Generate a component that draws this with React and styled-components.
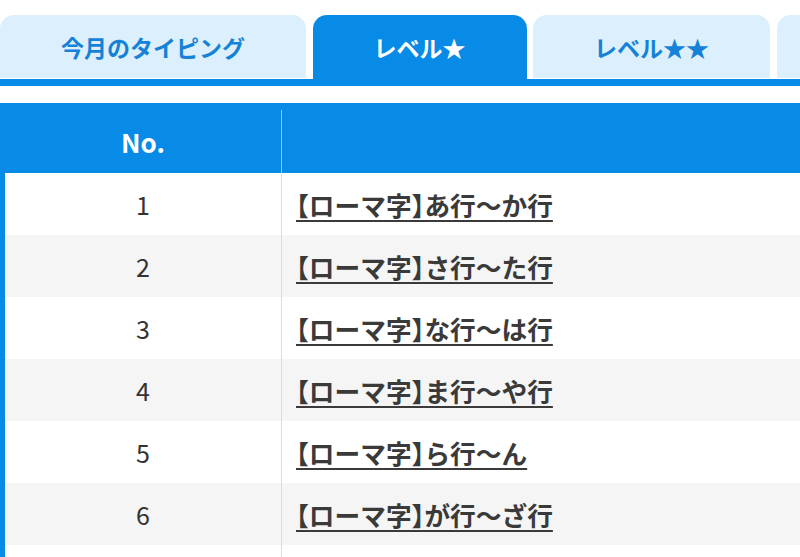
import React from 'react';
import styled, { createGlobalStyle } from 'styled-components';

const GlobalStyle = createGlobalStyle`
  html, body {
    margin: 0;
    padding: 0;
    background: #ffffff;
    font-family: "Noto Sans CJK JP", "Noto Sans", sans-serif;
    overflow: hidden;
  }
`;

const BLUE = '#078be6';

const TabBar = styled.div`
  display: flex;
  gap: 6.5px;
  padding-top: 15px;
  border-bottom: 7px solid ${BLUE};
  white-space: nowrap;
  overflow: hidden;
`;

const Tab = styled.div`
  flex-shrink: 0;
  height: 64px;
  padding: 0 61px;
  display: flex;
  align-items: center;
  justify-content: center;
  border-radius: 14px 14px 0 0;
  font-size: 23px;
  font-weight: 700;
  background: ${(p) => (p.active ? BLUE : '#dbeffd')};
  color: ${(p) => (p.active ? '#ffffff' : '#1582d8')};
  box-sizing: border-box;
  border-bottom: ${(p) => (p.active ? 'none' : '1px solid #ffffff')};
`;

const Table = styled.table`
  margin-top: 17px;
  width: 100%;
  border-collapse: collapse;
  border-top: 7px solid ${BLUE};
  border-left: 5px solid ${BLUE};
`;

const HeadCell = styled.th`
  background: ${BLUE};
  color: #ffffff;
  height: 63px;
  padding: 0;
  font-size: 26px;
  font-weight: 700;
  text-align: center;
  border-right: ${(p) => (p.first ? '1px solid rgba(255,255,255,0.55)' : 'none')};
`;

const Row = styled.tr`
  background: ${(p) => (p.striped ? '#f5f5f5' : '#ffffff')};
`;

const NumCell = styled.td`
  width: 276px;
  height: 62px;
  padding: 0;
  text-align: center;
  font-size: 25px;
  color: #333333;
  border-right: 1px solid #dddddd;
`;

const TitleCell = styled.td`
  padding: 0 0 0 14px;
  height: 62px;
`;

const Link = styled.a`
  font-size: 25.7px;
  font-weight: 700;
  font-feature-settings: "halt";
  color: #3a3a3a;
  text-decoration: underline;
  text-decoration-thickness: 2px;
  text-underline-offset: 4px;
  cursor: pointer;
`;

const tabs = ['今月のタイピング', 'レベル★', 'レベル★★', 'レベル★★★'];

const rows = [
  '【ローマ字】あ行〜か行',
  '【ローマ字】さ行〜た行',
  '【ローマ字】な行〜は行',
  '【ローマ字】ま行〜や行',
  '【ローマ字】ら行〜ん',
  '【ローマ字】が行〜ざ行',
  '【ローマ字】だ行〜ぱ行',
];

export default function App() {
  return (
    <>
      <GlobalStyle />
      <TabBar>
        {tabs.map((t, i) => (
          <Tab key={t} active={i === 1}>
            {t}
          </Tab>
        ))}
      </TabBar>
      <Table>
        <thead>
          <tr>
            <HeadCell first>No.</HeadCell>
            <HeadCell />
          </tr>
        </thead>
        <tbody>
          {rows.map((r, i) => (
            <Row key={r} striped={i % 2 === 1}>
              <NumCell>{i + 1}</NumCell>
              <TitleCell>
                <Link>{r}</Link>
              </TitleCell>
            </Row>
          ))}
        </tbody>
      </Table>
    </>
  );
}
